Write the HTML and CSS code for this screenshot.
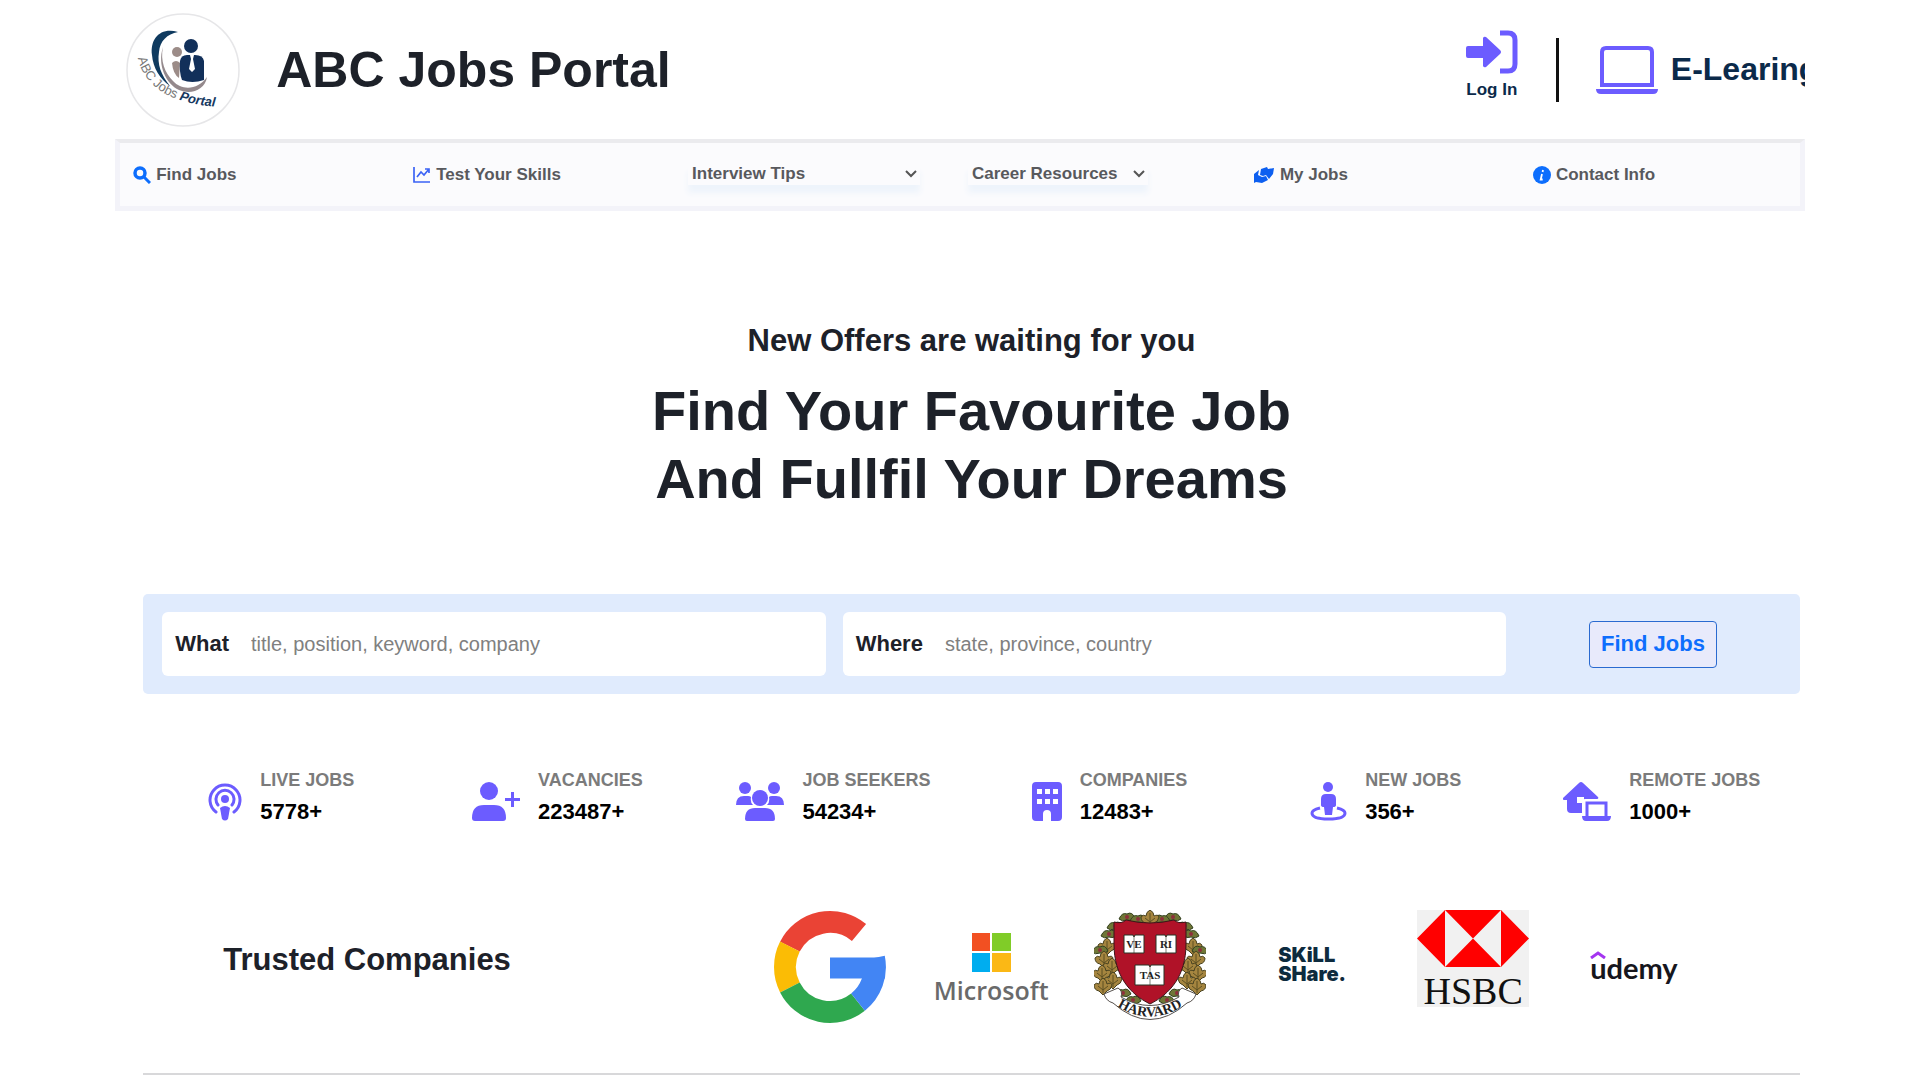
FILE: index.html
```html
<!DOCTYPE html>
<html lang="en">
<head>
  <meta charset="UTF-8" />
  <meta name="viewport" content="width=device-width, initial-scale=1" />
  <title>ABC Jobs Portal</title>
  <link rel="stylesheet" href="styles.css">
</head>
<body>
  <div class="page">
    <!-- Header -->
    <header class="header">
      <svg class="logo" viewBox="0 0 114 114">
        <circle cx="57" cy="57" r="56" fill="#fff" stroke="#e6e6e8" stroke-width="1.5"/>
        <path d="M52 19C34 14 24 26 26 42c1 13 8 24 18 31C35 62 31 51 33 39c1-11 8-18 19-20z" fill="#0f3a5f"/>
        <path d="M37 34c-3 14 2 26 10 34 9 10 25 9 34-4-2 13-16 18-28 13-13-6-22-25-16-43z" fill="#94898c"/>
        <circle cx="51" cy="39" r="5" fill="#9c8c88"/>
        <path d="M46 50q4-4 8 0l-1 15q-6-4-7-15z" fill="#9c8c88"/>
        <circle cx="65" cy="33" r="7" fill="#12305a"/>
        <path d="M54 48q1-6 7-6h8q8 0 9 6v19q-12 4-22 0-3-8-2-19z" fill="#12305a"/>
        <path d="M64 42h4l-1 4 2 10-3 3-3-3 2-10z" fill="#fff"/>
        <path id="logoCurve" d="M12 45Q22 90 94 94" fill="none"/>
        <text class="logo-text"><textPath href="#logoCurve">ABC Jobs <tspan class="logo-bold">Portal</tspan></textPath></text>
      </svg>
      <h1>ABC Jobs Portal</h1>
      <a class="login" href="#">
        <svg width="52" height="44" viewBox="0 0 52 44">
          <path d="M2 16h15V8q1-2 3-1l14 13q2 2 0 4L20 37q-2 1-3-1v-8H2q-2 0-2-2v-8q0-2 2-2z" fill="#6c5cff"/>
          <path d="M34 3h8q7 0 7 7v24q0 7-7 7h-8" fill="none" stroke="#6c5cff" stroke-width="5"/>
        </svg>
        <span>Log In</span>
      </a>
      <a class="elearning" href="#">
        <svg width="62" height="48" viewBox="0 0 62 48">
          <path d="M6 39V6q0-4 4-4h42q4 0 4 4v33z" fill="none" stroke="#6c5cff" stroke-width="4"/>
          <path d="M0 43h62q0 5-5 5H5q-5 0-5-5z" fill="#6c5cff"/>
        </svg>
        <span>E-Learing</span>
      </a>
    </header>

    <!-- Menu -->
    <nav class="menu">
      <a href="#">
        <svg width="18" height="18" viewBox="0 0 18 18" fill="none" stroke="#0d6efd"><circle cx="7" cy="7" r="5" stroke-width="3.5"/><path d="M11 11l6 6" stroke-width="3"/></svg>
        Find Jobs
      </a>
      <a href="#">
        <svg width="18" height="18" viewBox="0 0 18 18" fill="none" stroke="#3b63f5" stroke-width="1.7"><path d="M1 1v15h16M4 11l4-5 3 3 5-6M12 3h4v4"/></svg>
        Test Your Skills
      </a>
      <div class="pick pick-wide">
        <select aria-label="Interview Tips"><option>Interview Tips</option></select>
        <svg width="14" height="10" viewBox="0 0 14 10"><path d="M2 2l5 5 5-5" fill="none" stroke="#555" stroke-width="2"/></svg>
      </div>
      <div class="pick">
        <select aria-label="Career Resources"><option>Career Resources</option></select>
        <svg width="14" height="10" viewBox="0 0 14 10"><path d="M2 2l5 5 5-5" fill="none" stroke="#555" stroke-width="2"/></svg>
      </div>
      <a href="#">
        <svg width="22" height="18" viewBox="0 0 22 18"><path d="M8 3l6-2 1 2 6-1-1 6-4 5-3-4-3 1-3-1zM1 8l5-4-1 5 4 2 4-1 2 4-6 3-6-1-2 1z" fill="#0d5ff0"/></svg>
        My Jobs
      </a>
      <a href="#">
        <svg width="18" height="18" viewBox="0 0 18 18"><circle cx="9" cy="9" r="9" fill="#0d6efd"/><path d="M10 4l-.4 2M9 8l-1.300 5.500h2" fill="none" stroke="#fff" stroke-width="1.800"/></svg>
        Contact Info
      </a>
    </nav>

    <main>
      <section class="hero">
        <p>New Offers are waiting for you</p>
        <h2>Find Your Favourite Job<br>And Fullfil Your Dreams</h2>
      </section>

      <!-- Search -->
      <form class="search">
        <div class="field">
          <label for="what">What</label>
          <input id="what" type="text" placeholder="title, position, keyword, company">
        </div>
        <div class="field">
          <label for="where">Where</label>
          <input id="where" type="text" placeholder="state, province, country">
        </div>
        <button type="button">Find Jobs</button>
      </form>

      <!-- Numbers -->
      <section class="stats">
        <div class="stat">
          <svg width="34" height="39" viewBox="0 0 34 39">
            <g fill="none" stroke="#6c5cff" stroke-width="3" stroke-linecap="round"><path d="M8 30a15 15 0 1 1 18 0M10 23a9 9 0 1 1 14 0"/></g>
            <circle cx="17" cy="17" r="4" fill="#6c5cff"/><path d="M12 26q5-4 10 0l-2 11q-3 3-6 0z" fill="#6c5cff"/>
          </svg>
          <div><h3>LIVE JOBS</h3><strong>5778+</strong></div>
        </div>
        <div class="stat">
          <svg width="48" height="39" viewBox="0 0 48 39" fill="#6c5cff">
            <circle cx="17" cy="9" r="9"/><path d="M0 36q0-13 12-13h10q12 0 12 13 0 3-3 3H3q-3 0-3-3zM39 10h3v6h6v3h-6v6h-3v-6h-6v-3h6z"/>
          </svg>
          <div><h3>VACANCIES</h3><strong>223487+</strong></div>
        </div>
        <div class="stat">
          <svg width="48" height="39" viewBox="0 0 48 39" fill="#6c5cff">
            <circle cx="9" cy="6" r="6"/><circle cx="38" cy="6" r="6"/><circle cx="24" cy="16" r="8"/>
            <path d="M0 23q0-9 8-9h4q2 0 3 1-1 5 2 8zM31 23q3-3 2-8 1-1 3-1h4q8 0 8 9zM9 37q0-11 10-11h10q10 0 10 11 0 2-2 2H11q-2 0-2-2z"/>
          </svg>
          <div><h3>JOB SEEKERS</h3><strong>54234+</strong></div>
        </div>
        <div class="stat">
          <svg width="30" height="39" viewBox="0 0 30 39">
            <path d="M4 0h22q4 0 4 4v31q0 4-4 4h-7v-7q0-4-4-4t-4 4v7H4q-4 0-4-4V4q0-4 4-4z" fill="#6c5cff"/>
            <path d="M5 7h5v5H5zM13 7h5v5h-5zM21 7h5v5h-5zM5 17h5v5H5zM13 17h5v5h-5zM21 17h5v5h-5z" fill="#fff"/>
          </svg>
          <div><h3>COMPANIES</h3><strong>12483+</strong></div>
        </div>
        <div class="stat">
          <svg width="37" height="39" viewBox="0 0 37 39" fill="#6c5cff">
            <circle cx="18" cy="5" r="5"/><path d="M11 17q0-5 5-5h5q5 0 5 5v6q0 2-3 2l-1 8h-7l-1-8q-3 0-3-2z"/>
            <path d="M10 26q-8 2-8 5 0 6 16.500 6T35 31q0-3-8-5" fill="none" stroke="#6c5cff" stroke-width="3"/>
          </svg>
          <div><h3>NEW JOBS</h3><strong>356+</strong></div>
        </div>
        <div class="stat">
          <svg width="48" height="39" viewBox="0 0 48 39" fill="#6c5cff">
            <path d="M0 16L16 1q2-2 4 0l15 14q1 2-1 2H22q-3 0-3 3v11H8q-4 0-4-4v-9H2q-3 0-2-2z"/>
            <path d="M14 15h7v6h-7z" fill="#fff"/>
            <path d="M24 34V21h19v13" fill="none" stroke="#6c5cff" stroke-width="3"/><path d="M19 34h29q0 5-4 5H23q-4 0-4-5z"/>
          </svg>
          <div><h3>REMOTE JOBS</h3><strong>1000+</strong></div>
        </div>
      </section>

      <!-- Companies -->
      <section class="trusted">
        <h2>Trusted Companies</h2>
        <div class="brands">
          <svg width="112" height="114" viewBox="-56 -57 112 114" role="img" aria-label="Google">
            <g fill="none" stroke-width="22">
              <path d="M-40.100-20.400A45 45 0 0 1 29-34.500" stroke="#ea4335"/>
              <path d="M-40.100 20.400A45 45 0 0 1-40.100-20.400" stroke="#fbbc05"/>
              <path d="M28 35.200A45 45 0 0 1-40.100 20.400" stroke="#2fa84f"/>
              <path d="M44-9A45 45 0 0 1 28 35.200" stroke="#4285f4"/>
            </g>
            <path d="M0-9.500h55v21H0z" fill="#4285f4"/>
          </svg>
          <div class="microsoft">
            <svg width="39" height="39" viewBox="0 0 39 39"><path d="M0 0h18v18H0z" fill="#f25022"/><path d="M20 0h19v18H20z" fill="#80cc28"/><path d="M0 20h18v19H0z" fill="#00adef"/><path d="M20 20h19v19H20z" fill="#fbb815"/></svg>
            <span>Microsoft</span>
          </div>
          <svg width="112" height="112" viewBox="0 0 112 112" role="img" aria-label="Harvard">
            <defs>
              <g id="leaf">
                <path d="M0-8q4 2 4 6 4-2 5 1-1 5-5 6l-4 4-4-4q-5-1-5-6 2-3 5-1 0-4 4-6z" fill="#a5853f" stroke="#4a4320"/>
                <path d="M0-5V7M-5 0l5 4 5-4" fill="none" stroke="#5c4f22"/>
              </g>
              <g id="sprig">
                <path d="M-8 2q3-7 8-5 5-3 8 4-4 4-8 2-5 2-8-1z" fill="#6f7636" stroke="#33401f"/>
                <circle r="2" fill="#8e2f3a"/>
              </g>
              <g id="side">
                <use href="#sprig" x="21" y="16"/><use href="#sprig" x="15" y="24"/>
                <use href="#leaf" x="13" y="36"/><use href="#sprig" x="6" y="40"/>
                <use href="#leaf" x="10" y="49"/><use href="#leaf" x="18" y="56"/>
                <use href="#leaf" x="8" y="63"/><use href="#leaf" x="19" y="70"/>
                <use href="#leaf" x="9" y="76"/><use href="#sprig" x="29" y="83"/><use href="#sprig" x="39" y="90"/>
                <use href="#sprig" x="33" y="7"/><use href="#sprig" x="44" y="9"/>
              </g>
            </defs>
            <use href="#side"/>
            <use href="#side" transform="matrix(-1 0 0 1 112 0)"/>
            <use href="#leaf" x="56" y="8"/>
            <path d="M20 12q8 2 12-2 24 6 48 0 4 4 12 2v22C92 66 76 84 56 94 36 84 20 66 20 34z" fill="#b01228" stroke="#3b1518"/>
            <g fill="#fff" stroke="#283224"><path d="M30 25h9l1 2 1-2h9v18H30zM62 25h9l1 2 1-2h9v18H62zM41 55h14l1 2 1-2h13v20H41z"/><path d="M40 27v16M72 27v16M56 57v18" stroke-width=".6"/></g>
            <g class="veritas"><text x="40" y="38">VE</text><text x="72" y="38">RI</text><text x="56" y="69">TAS</text></g>
            <path d="M10 84l14-6q5 3 3 9 29 17 58 0-2-6 3-9l14 6q-2 7-9 9-37 33-74 0-7-2-9-9z" fill="#fff" stroke="#55504c"/>
            <path id="ribbonCurve" d="M21 95q35 23 70 0" fill="none"/>
            <text class="ribbon-text"><textPath href="#ribbonCurve" startOffset="50%">HARVARD</textPath></text>
          </svg>
          <div class="skillshare">SKiLL<br>SHare.</div>
          <div class="hsbc">
            <svg width="112" height="57" viewBox="0 0 112 57"><path d="M0 28.500L28 0v57zM112 28.500L84 0v57zM28 0h56L56 28.500zM28 57h56L56 28.500z" fill="#f00"/></svg>
            <span>HSBC</span>
          </div>
          <div class="udemy">
            <svg width="16" height="8" viewBox="0 0 16 8"><path d="M1 7l7-5 7 5" fill="none" stroke="#a435f0" stroke-width="3"/></svg>
            <span>udemy</span>
          </div>
        </div>
      </section>
      <hr>
    </main>
  </div>
</body>
</html>
```
FILE: styles.css
```css
* {
  box-sizing: border-box;
}

body {
  margin: 0;
  font-family: "Liberation Sans", Arial, sans-serif;
  background-color: #fff;
  color: #1d2129;
}

h1, h2, h3, p {
  margin: 0;
}

a {
  text-decoration: none;
}

svg {
  display: block;
  flex: none;
}

.page {
  margin: 0 6%;
}

/* header */
.header {
  display: flex;
  align-items: center;
  height: 139px;
  padding-left: 11px;
  overflow: hidden;
  white-space: nowrap;
}

.logo {
  width: 114px;
  height: 114px;
}

.logo-text {
  font-size: 13px;
  fill: #777;
}

.logo-bold {
  font-weight: bold;
  font-style: italic;
  fill: #16385f;
}

h1 {
  margin-left: 36px;
  font-size: 50px;
}

.login {
  display: flex;
  flex-direction: column;
  align-items: center;
  gap: 6px;
  margin-left: auto;
  padding-bottom: 10px;
  font-size: 17px;
  line-height: 20px;
  font-weight: bold;
  color: #0b2a4a;
}

.elearning {
  display: flex;
  align-items: center;
  gap: 13px;
  width: 249px;
  height: 64px;
  margin-left: 38px;
  padding-left: 37px;
  border-left: 3px solid #111;
  font-size: 32px;
  font-weight: bold;
  color: #0b2a4a;
}

/* menu */
.menu {
  display: grid;
  grid-template-columns: repeat(6, 1fr);
  align-items: center;
  height: 72px;
  border: 5px solid #f3f3f9;
  border-top: 4px solid #ebebee;
  background-color: #fbfbfd;
  font-size: 17px;
  font-weight: bold;
  color: #58595d;
}

.menu a {
  display: flex;
  align-items: center;
  gap: 5px;
  padding-left: 13px;
  color: inherit;
}

.pick {
  position: relative;
  width: 180px;
  margin-left: 8px;
  box-shadow: 0 8px 6px #eef4fb;
}

.pick-wide {
  width: 232px;
}

.pick select {
  width: 100%;
  padding: 0 4px 2px;
  border: none;
  appearance: none;
  background-color: #fbfbfd;
  font: inherit;
  color: inherit;
}

.pick svg {
  position: absolute;
  right: 2px;
  top: 5px;
  pointer-events: none;
}

/* main */
main {
  margin: 0 5px 0 28px;
}

.hero {
  padding-top: 111px;
  text-align: center;
}

.hero p {
  font-size: 31px;
  line-height: 38px;
  font-weight: bold;
}

.hero h2 {
  margin-top: 17px;
  font-size: 56px;
  line-height: 68px;
}

.search {
  display: grid;
  grid-template-columns: 23fr 23fr 9fr;
  align-items: center;
  gap: 17px;
  margin-top: 81px;
  padding: 18px 17px 18px 19px;
  border-radius: 5px;
  background-color: #e0ebfd;
}

.field {
  display: flex;
  align-items: center;
  height: 64px;
  padding: 0 13px;
  border-radius: 6px;
  background-color: #fff;
}

.field label {
  font-size: 22px;
  font-weight: bold;
}

.field input {
  flex: 1;
  min-width: 0;
  margin-left: 22px;
  padding: 0;
  border: none;
  outline: none;
  font-family: inherit;
  font-size: 20px;
}

.field input::placeholder {
  color: #808080;
}

.search button {
  justify-self: center;
  height: 47px;
  padding: 0 11px;
  border: 1px solid #2a6ad0;
  border-radius: 4px;
  background-color: #e8eafb;
  font-family: inherit;
  font-size: 22px;
  font-weight: bold;
  color: #0d6efd;
  cursor: pointer;
}

.stats {
  display: grid;
  grid-template-columns: repeat(6, 1fr);
  margin-top: 71px;
}

.stat {
  display: flex;
  justify-content: center;
  align-items: flex-end;
  gap: 18px;
}

.stat h3 {
  font-size: 18px;
  line-height: 30px;
  font-weight: bold;
  color: #7b7b7b;
}

.stat strong {
  display: block;
  font-size: 22px;
  line-height: 34px;
  color: #000;
}

.stat > svg {
  margin-bottom: 8px;
}

.trusted {
  display: flex;
  margin-top: 81px;
  padding-left: 80px;
}

.trusted h2 {
  width: 551px;
  padding-top: 32px;
  font-size: 31px;
  line-height: 36px;
}

.brands {
  display: flex;
  align-items: flex-start;
  height: 114px;
}

.microsoft {
  display: flex;
  flex-direction: column;
  align-items: center;
  width: 114px;
  margin: 23px 46px 0 48px;
  font-family: "Open Sans", sans-serif;
  font-size: 25px;
  line-height: 36px;
  font-weight: 600;
  color: #6a6a6a;
}

.veritas {
  font-family: "Liberation Serif", serif;
  font-size: 11px;
  font-weight: bold;
  text-anchor: middle;
  fill: #222;
}

.ribbon-text {
  font-family: "Liberation Serif", serif;
  font-size: 14px;
  font-weight: bold;
  text-anchor: middle;
  fill: #222;
}

.skillshare {
  width: 72px;
  margin: 36px 67px 0 72px;
  font-family: Inter, sans-serif;
  font-size: 20px;
  line-height: 19px;
  font-weight: 900;
  color: #0d2b3e;
}

.hsbc {
  width: 112px;
  height: 97px;
  background-color: #f1f1f1;
  font-family: "Liberation Serif", serif;
  font-size: 38px;
  line-height: 48px;
  text-align: center;
  color: #111;
}

.udemy {
  margin: 41px 0 0 61px;
  font-family: Lato, sans-serif;
  font-size: 29px;
  line-height: 18px;
  font-weight: bold;
  color: #16161d;
}

hr {
  height: 2px;
  margin: 49px 0 0;
  border: none;
  background-color: #d8d8da;
}
```
